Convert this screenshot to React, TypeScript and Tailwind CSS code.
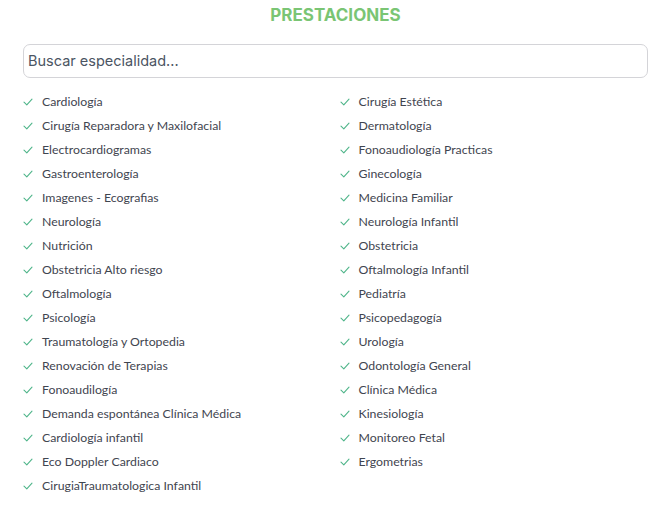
import React from "react";

const left = [
  "Cardiología",
  "Cirugía Reparadora y Maxilofacial",
  "Electrocardiogramas",
  "Gastroenterología",
  "Imagenes - Ecografias",
  "Neurología",
  "Nutrición",
  "Obstetricia Alto riesgo",
  "Oftalmología",
  "Psicología",
  "Traumatología y Ortopedia",
  "Renovación de Terapias",
  "Fonoaudilogía",
  "Demanda espontánea Clínica Médica",
  "Cardiología infantil",
  "Eco Doppler Cardiaco",
  "CirugiaTraumatologica Infantil",
];

const right = [
  "Cirugía Estética",
  "Dermatología",
  "Fonoaudiología Practicas",
  "Ginecología",
  "Medicina Familiar",
  "Neurología Infantil",
  "Obstetricia",
  "Oftalmología Infantil",
  "Pediatría",
  "Psicopedagogía",
  "Urología",
  "Odontología General",
  "Clínica Médica",
  "Kinesiología",
  "Monitoreo Fetal",
  "Ergometrias",
];

function Check() {
  return (
    <svg width="10" height="8" viewBox="0 0 10 8" className="shrink-0">
      <path d="M1 4.2 L3.8 6.8 L9 1.2" fill="none" stroke="#4fb58a" strokeWidth="1.1" strokeLinecap="round" strokeLinejoin="round" />
    </svg>
  );
}

function Item({ text }: { text: string }) {
  return (
    <li className="flex items-center h-6 gap-[9px]">
      <Check />
      <span className="text-[12.3px] text-[#3f4550] whitespace-nowrap" style={{ fontFamily: "Lato, 'Noto Sans', sans-serif" }}>{text}</span>
    </li>
  );
}

export default function App() {
  return (
    <div className="w-[671px] h-[506px] bg-white px-[23px]" style={{ fontFamily: "Inter, 'Noto Sans', sans-serif" }}>
      <h1 className="text-center font-bold text-[17px] text-[#7ac574] pt-[4px] h-[44px] leading-[22px] tracking-[0px]">PRESTACIONES</h1>
      <div className="h-[34px] border border-[#d4d4d8] rounded-[7px] flex items-center px-[4px]">
        <span className="text-[14.5px] text-[#4b5563]">Buscar especialidad...</span>
      </div>
      <div className="grid grid-cols-2 gap-x-[6px] mt-[12px]">
        <ul>
          {left.map((t) => (
            <Item key={t} text={t} />
          ))}
        </ul>
        <ul className="pl-[1px]">
          {right.map((t) => (
            <Item key={t} text={t} />
          ))}
        </ul>
      </div>
    </div>
  );
}
